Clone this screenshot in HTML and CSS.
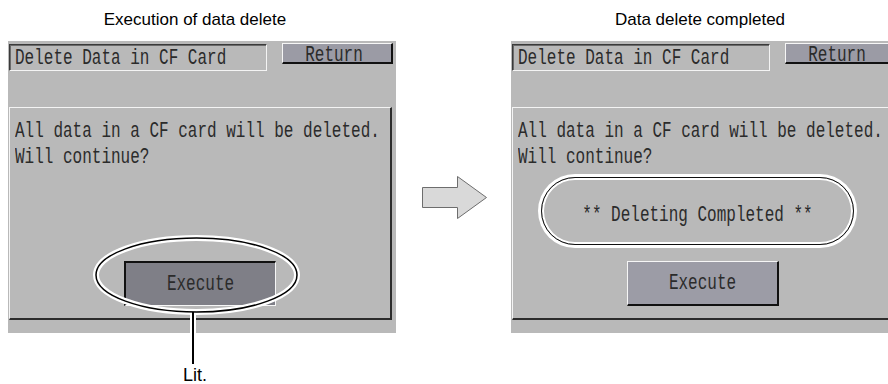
FILE: index.html
```html
<!DOCTYPE html>
<html>
<head>
<meta charset="utf-8">
<link rel="stylesheet" href="styles.css">
</head>
<body>
<div class="page">
  <section class="col col-left">
    <h2 class="caption">Execution of data delete</h2>
    <div class="panel">
      <div class="bar">
        <div class="titlebox"><span class="hmi">Delete Data in CF Card</span></div>
        <div class="btn-return"><span class="hmi">Return</span></div>
      </div>
      <div class="msgbox">
        <div class="line"><span class="hmi">All data in a CF card will be deleted.</span></div>
        <div class="line"><span class="hmi">Will continue?</span></div>
        <div class="btn-exec lit"><span class="hmi">Execute</span></div>
      </div>
    </div>
    <svg class="callout" width="388" height="384" viewBox="0 0 388 384">
      <line x1="185" y1="312" x2="185" y2="364" stroke="#fff" stroke-width="6"/>
      <ellipse cx="188.5" cy="275" rx="100.5" ry="37" fill="none" stroke="#fff" stroke-width="6"/>
      <ellipse cx="188.5" cy="275" rx="100.5" ry="37" fill="none" stroke="#000" stroke-width="1.5"/>
      <line x1="185" y1="312" x2="185" y2="364" stroke="#000" stroke-width="2"/>
    </svg>
    <div class="lit-label">Lit.</div>
  </section>

  <div class="arrow-col">
    <svg width="66" height="44" viewBox="0 0 66 44">
      <polygon points="0.5,11.5 35.5,11.5 35.5,0.5 64.5,21.5 35.5,42.5 35.5,31.5 0.5,31.5" fill="#d9d9d9" stroke="#6d6d6d" stroke-width="1"/>
    </svg>
  </div>

  <section class="col col-right">
    <h2 class="caption">Data delete completed</h2>
    <div class="panel">
      <div class="bar">
        <div class="titlebox"><span class="hmi">Delete Data in CF Card</span></div>
        <div class="btn-return"><span class="hmi">Return</span></div>
      </div>
      <div class="msgbox">
        <div class="line"><span class="hmi">All data in a CF card will be deleted.</span></div>
        <div class="line"><span class="hmi">Will continue?</span></div>
        <div class="pill"><span class="hmi">** Deleting Completed **</span></div>
        <div class="btn-exec"><span class="hmi">Execute</span></div>
      </div>
    </div>
  </section>
</div>
</body>
</html>
```
FILE: styles.css
```css
html, body {
  margin: 0;
  padding: 0;
  background: #fff;
  overflow: hidden;
}
.page {
  display: flex;
  width: 888px;
  height: 384px;
  overflow: hidden;
  font-family: "Liberation Sans", Arial, sans-serif;
  color: #000;
}
.col {
  position: relative;
  flex: 0 0 388px;
  width: 388px;
}
.col-left { margin-left: 8px; }
.caption {
  margin: 0;
  height: 41px;
  box-sizing: border-box;
  padding-top: 10px;
  font-size: 17px;
  line-height: 20px;
  font-weight: normal;
  text-align: center;
}
.col-left .caption { padding-right: 14px; }
.col-right .caption { padding-right: 10px; }

.arrow-col {
  flex: 0 0 115px;
  box-sizing: border-box;
  padding: 176px 0 0 26px;
}
.arrow-col svg { display: block; }

.panel {
  background: #b9b9b9;
  height: 292px;
  box-sizing: border-box;
  padding: 2px 0 0 1px;
}
.hmi {
  display: inline-block;
  font-family: "Liberation Mono", "Courier New", monospace;
  font-size: 16px;
  color: #2b2b2b;
  white-space: pre;
  transform: scaleY(1.4);
}
.bar {
  display: flex;
  align-items: flex-start;
  gap: 15px;
}
.titlebox {
  margin-top: 1px;
  width: 258px;
  height: 27px;
  box-sizing: border-box;
  border: 1px solid;
  border-color: #3a3a3a #f4f4f4 #f4f4f4 #3a3a3a;
  box-shadow: inset 1px 1px 0 #6a6a6a;
  padding-left: 5px;
  line-height: 25px;
}
.btn-return {
  width: 111px;
  height: 21px;
  box-sizing: border-box;
  background: #9b9ba5;
  border-style: solid;
  border-width: 1px 2px 2px 1px;
  border-color: #f6f6f6 #111 #111 #f6f6f6;
  text-align: center;
  padding: 3px 6px 0 0;
  line-height: 15px;
}
.msgbox {
  margin-top: 36px;
  width: 383px;
  height: 213px;
  box-sizing: border-box;
  border-style: solid;
  border-width: 1px 2px 2px 1px;
  border-color: #f4f4f4 #2c2c2c #2c2c2c #f4f4f4;
  padding: 9px 0 0 5px;
  display: flex;
  flex-direction: column;
}
.line {
  height: 26px;
  line-height: 26px;
}
.pill {
  margin: 8px 0 0 23px;
  width: 313px;
  height: 68px;
  box-sizing: border-box;
  border: 1.5px solid #111;
  border-radius: 34px;
  box-shadow: 0 0 0 3px #fff, inset 0 0 0 2px #fff;
  display: flex;
  align-items: center;
  justify-content: center;
  padding-top: 8px;
}
.btn-exec {
  margin: auto 0 12px -5px;
  align-self: center;
  width: 152px;
  height: 45px;
  box-sizing: border-box;
  background: #9c9ca6;
  border-style: solid;
  border-width: 1px 2px 2px 1px;
  border-color: #f6f6f6 #111 #111 #f6f6f6;
  display: flex;
  align-items: center;
  justify-content: center;
}
.btn-exec.lit {
  background: #7f7f87;
  border-width: 2px 1px 1px 2px;
  border-color: #111 #f6f6f6 #f6f6f6 #111;
}
.callout {
  position: absolute;
  left: 0;
  top: 0;
  pointer-events: none;
}
.lit-label {
  position: absolute;
  left: 157px;
  width: 60px;
  top: 365px;
  font-size: 18px;
  line-height: 20px;
  text-align: center;
}
```
